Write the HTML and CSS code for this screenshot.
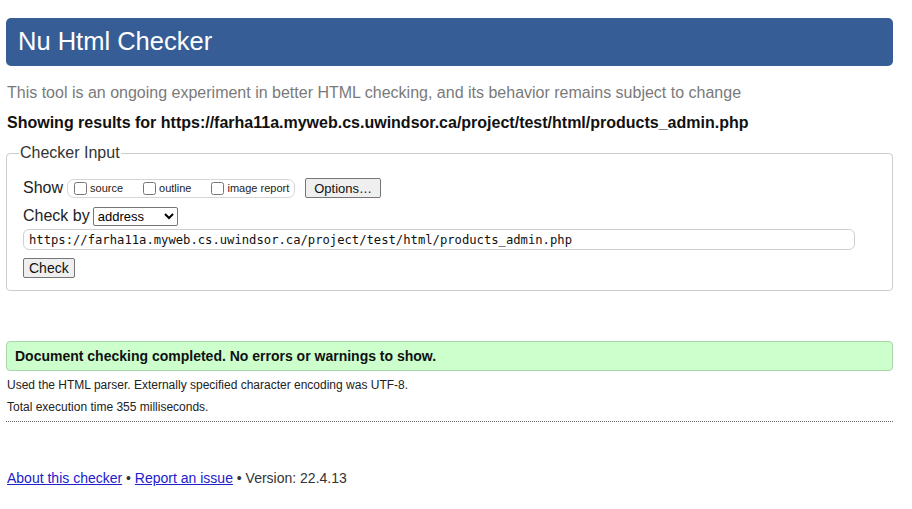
FILE: index.html
```html
<!DOCTYPE html>
<html>
<head>
<meta charset="utf-8">
<title>Nu Html Checker</title>
<link rel="stylesheet" href="styles.css">
</head>
<body>
<h1 class="banner">Nu Html Checker</h1>
<p class="intro">This tool is an ongoing experiment in better HTML checking, and its behavior remains subject to change</p>
<p class="showing">Showing results for https://farha11a.myweb.cs.uwindsor.ca/project/test/html/products_admin.php</p>
<form class="form">
  <fieldset class="fs">
    <legend class="legend">Checker Input</legend>
    <div class="row">
      <span class="lbl">Show</span>
      <span class="group">
        <label class="opt"><input type="checkbox" class="cb">source</label>
        <label class="opt"><input type="checkbox" class="cb">outline</label>
        <label class="opt"><input type="checkbox" class="cb">image report</label>
      </span>
      <button type="button" class="btn btn-opts">Options…</button>
    </div>
    <div class="row row2">
      <span class="lbl">Check by</span>
      <select class="sel"><option>address</option></select>
    </div>
    <input class="url" type="text" value="https://farha11a.myweb.cs.uwindsor.ca/project/test/html/products_admin.php">
    <div class="row row3">
      <button type="button" class="btn btn-check">Check</button>
    </div>
  </fieldset>
</form>
<p class="success">Document checking completed. No errors or warnings to show.</p>
<p class="details">Used the HTML parser. Externally specified character encoding was UTF-8.</p>
<p class="details">Total execution time 355 milliseconds.</p>
<hr class="sep">
<p class="footer"><a href="#">About this checker</a> • <a href="#">Report an issue</a> • Version: 22.4.13</p>
</body>
</html>
```
FILE: styles.css
```css
html, body { background: #fff; }
body {
  margin: 0;
  padding: 18px 19px 0 6px;
  font-family: "Liberation Sans", Arial, sans-serif;
  color: #111;
}
.banner {
  margin: 0;
  height: 48px;
  box-sizing: border-box;
  padding: 8px 12px 0;
  background: #365d95;
  color: #fff;
  font-weight: normal;
  font-size: 25.5px;
  line-height: 30px;
  border-radius: 5px;
}
.intro {
  margin: 17px 0 0 1px;
  font-size: 16px;
  line-height: 20px;
  color: #7a7a7a;
}
.showing {
  margin: 10px 0 0 1px;
  font-size: 16px;
  line-height: 20px;
  font-weight: bold;
  color: #111;
}
.form { margin: 11px 0 0; }
.fs {
  margin: 0;
  padding: 15px 16px 12px;
  border: 1px solid #cdcdcd;
  border-radius: 4px;
}
.legend {
  padding: 0 1px;
  margin-left: -4px;
  font-size: 16px;
  color: #333;
}
.row { display: flex; align-items: center; height: 22px; }
.lbl { font-size: 16px; color: #222; margin-right: 4px; }
.group {
  display: inline-flex;
  align-items: center;
  height: 17px;
  border: 1px solid #d6d6d6;
  border-radius: 7px;
  padding: 0 5px 0 2px;
  margin-left: 0;
}
.opt {
  display: inline-flex;
  align-items: center;
  font-size: 11px;
  color: #222;
  margin-right: 16px;
}
.opt:last-child { margin-right: 0; }
.cb { margin: 0 3px 0 4px; width: 13px; height: 13px; }
.btn {
  font-family: "Liberation Sans", Arial, sans-serif;
  font-size: 13px;
  color: #111;
  background: #efefef;
  border: 1px solid #767676;
  border-radius: 2px;
  padding: 1px 8px;
  height: 20px;
}
.btn-opts { margin-left: 10px; }
.row2 { margin-top: 7px; height: 20px; }
.sel {
  font-family: "Liberation Sans", Arial, sans-serif;
  font-size: 13px;
  width: 85px;
  height: 19px;
  border: 1px solid #767676;
  border-radius: 2px;
  background: #fff;
  margin-left: -1px;
}
.url {
  display: block;
  margin-top: 3px;
  width: 832px;
  height: 21px;
  box-sizing: border-box;
  border: 1px solid #cfcfcf;
  border-radius: 6px;
  padding: 0 5px;
  font-family: "DejaVu Sans Mono", "Liberation Mono", monospace;
  font-size: 12.2px;
  color: #111;
}
.row3 { margin-top: 8px; height: 20px; }
.btn-check { font-size: 14px; padding: 0 5px; }
.success {
  margin: 50px 0 0;
  padding: 6px 8px;
  height: 30px;
  box-sizing: border-box;
  background: #ccffcc;
  border: 1px solid #aad4aa;
  border-radius: 4px;
  font-size: 14px;
  line-height: 17px;
  font-weight: bold;
  color: #111;
}
.details {
  margin: 6px 0 0 1px;
  font-size: 12px;
  line-height: 16px;
  color: #222;
}
.sep {
  margin: 6px 0 0;
  border: 0;
  border-top: 1px dotted #666;
  height: 0;
}
.footer {
  margin: 48px 0 0 1px;
  font-size: 14px;
  line-height: 17px;
  color: #333;
}
.footer a { color: #2020cc; }
```
